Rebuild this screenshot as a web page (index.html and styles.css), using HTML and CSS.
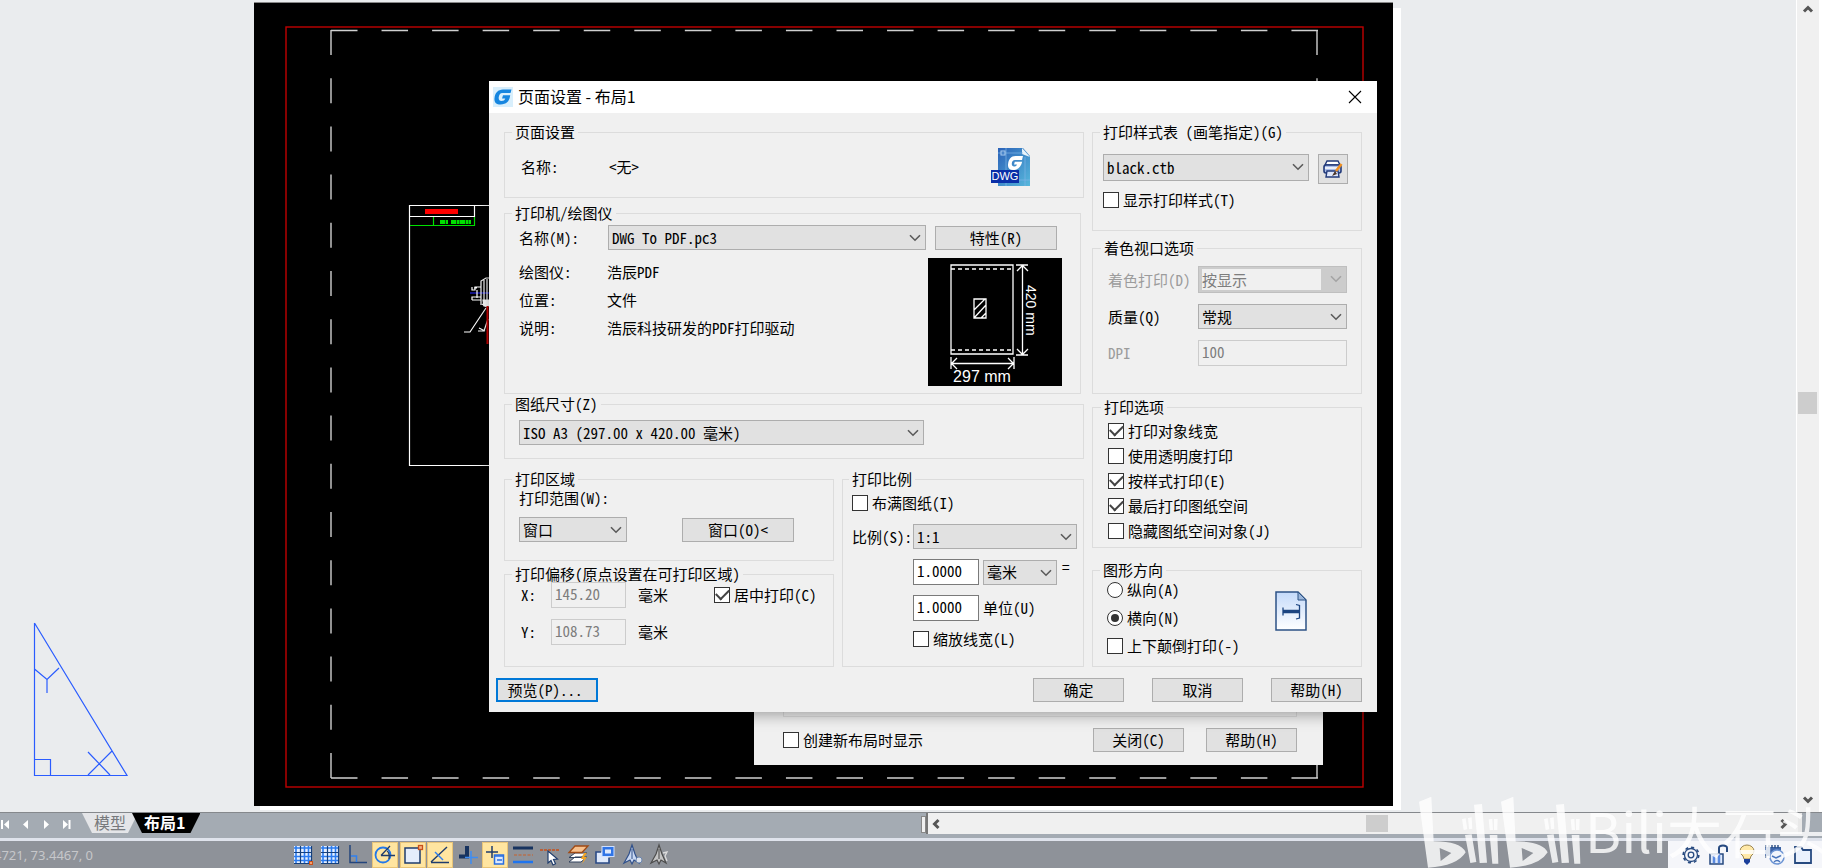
FILE: index.html
```html
<!DOCTYPE html>
<html lang="zh-CN">
<head>
<meta charset="utf-8">
<title>页面设置 - 布局1</title>
<link rel="stylesheet" href="styles.css">
</head>
<body>
<svg class="defs" aria-hidden="true">
  <symbol id="chevron" viewBox="0 0 12 8"><path d="M1 1.2 6 6.2l5-5" fill="none" stroke="#5a5a5a" stroke-width="1.6"/></symbol>
  <symbol id="arrow" viewBox="0 0 12 12"><path d="M2 8.5 6 4.5l4 4" fill="none" stroke="#555" stroke-width="3"/></symbol>
</svg>

<div class="workspace">
  <main class="stage">
    <svg class="drawing" width="1422" height="812" viewBox="0 0 1422 812">
      <rect x="260" y="8" width="1141" height="802" fill="#fff"/>
      <rect x="254" y="2" width="1139" height="804" fill="#000"/>
      <path d="M254 2.5H1393" stroke="#888"/>
      <rect x="286" y="27" width="1077" height="760" fill="none" stroke="#c00000" stroke-width="1.4"/>
      <g fill="none" stroke="#cfcfcf" stroke-width="1.4">
        <path d="M331 30.5H1318" stroke-dasharray="26.500 24.050"/>
        <path d="M331 778H1318" stroke-dasharray="26.500 24.050"/>
        <path d="M331 30V778" stroke-dasharray="25 23.200"/>
        <path d="M1317 30V778" stroke-dasharray="25 23.200"/>
      </g>
      <g fill="none" stroke="#fff" stroke-width="1.200">
        <path d="M492 205.500H409.500V465.500H492M410 216.500H474.500V205.500"/>
        <path d="M410 225.500H474.500V217M433.500 217V225" stroke="#00e000"/>
        <path d="M440 222h8M451 222h20" stroke="#00e000" stroke-width="4" stroke-dasharray="5 .6 3 .4"/>
        <rect x="425" y="209" width="33" height="5" fill="#f00" stroke="none"/>
        <path d="M470 293h22" stroke="#2020e0"/>
        <path d="M481 305V281l5-3h6M484 302V280M487 300V279M481 287h-6v3h-3v-3M477 290v8M472 300v-3h9v3h-9M474 288h3M482 304l5 3M464 332h6l16-24M478 331h6l4-12M479 328l6 3"/>
        <path d="M483 300h6v6h-5z" fill="#fff"/>
        <path d="M487.500 306V344" stroke="#d00000" stroke-width="2"/>
      </g>
    </svg>

    <svg class="ucs" width="100" height="160" viewBox="0 0 100 160">
      <path d="M4.500 2V154.500H97L4.500 2M4.500 138.500H20.500V154.500M4.500 48 17 58.500 29 47M17 58.500V72M58 131 80 154M82 130 58 154" fill="none" stroke="#2a5cff" stroke-width="1.200"/>
    </svg>

    <section class="window creator" aria-label="新布局">
      <div class="creator-edge"></div>
      <div class="creator-row">
        <label class="check"><input type="checkbox">创建新布局时显示</label>
        <div class="creator-buttons">
          <button class="btn action">关闭(C)</button>
          <button class="btn action">帮助(H)</button>
        </div>
      </div>
    </section>

    <section class="window setup" role="dialog" aria-labelledby="setup-title">
      <header class="titlebar">
        <svg class="logo" width="20" height="20" viewBox="0 0 20 20">
          <rect width="20" height="20" fill="#d9effc"/>
          <path d="M18.500 2.500 17.500 6H9.500C7 6 6 8 5.700 10.500 5.500 13 6.500 14 8.500 14c2 0 3.300-.8 3.800-2.500H9l1-3.200h7.200C16.500 14 14 17.500 7.500 17.500 3 17.500 1 15 1.500 11 2 6 5 2.500 10 2.500z" fill="#1686e0"/>
        </svg>
        <h1 id="setup-title">页面设置 - 布局1</h1>
        <button class="close" aria-label="关闭"><svg width="14" height="14" viewBox="0 0 14 14"><path d="M1 1 13 13M13 1 1 13" stroke="#000" stroke-width="1.100"/></svg></button>
      </header>

      <form class="setup-body">
        <div class="columns">
          <div class="col-left">
            <fieldset class="group page">
              <legend>页面设置</legend>
              <div class="page-row">
                <span class="page-label">名称:</span><span class="page-value">&lt;无&gt;</span>
                <svg width="40" height="40" viewBox="0 0 40 40">
                  <defs><linearGradient id="dwg" x1="0" y1="0" x2="1" y2="1"><stop offset="0" stop-color="#2b62b8"/><stop offset="1" stop-color="#57b8dc"/></linearGradient></defs>
                  <path d="M7 1h25l7 8v30H7z" fill="url(#dwg)"/>
                  <path d="M31 1l8 9-8-3z" fill="#e8f3fa"/>
                  <path d="M7 6H32M15 1V39M34 10V39M7 33H39" stroke="#7fb6e6" stroke-width=".7"/>
                  <rect x="10" y="4" width="4" height="4" fill="none" stroke="#a9cdf0"/>
                  <path d="M32 9 31 13H24c-2 0-3 1.500-3.200 3.500-.2 2 .7 3 2.200 3 1.500 0 2.500-.6 3-2h-3l.8-2.800h7.400C30 20 27 23 22 23c-3.500 0-5.300-2-5-5.500C17.500 12 20 9 24.500 9z" fill="#fff"/>
                  <rect y="23" width="28" height="13" fill="#0a2fa8"/>
                  <text x="14" y="33" class="dwg-text">DWG</text>
                </svg>
              </div>
            </fieldset>

            <fieldset class="group printer">
              <legend>打印机/绘图仪</legend>
              <div class="printer-top">
                <label for="printer">名称(M):</label>
                <span class="combo"><select id="printer"><option>DWG To PDF.pc3</option></select><svg><use href="#chevron"/></svg></span>
                <button type="button" class="btn">特性(R)</button>
              </div>
              <div class="printer-info">
                <dl>
                  <dt>绘图仪:</dt><dd>浩辰PDF</dd>
                  <dt>位置:</dt><dd>文件</dd>
                  <dt>说明:</dt><dd>浩辰科技研发的PDF打印驱动</dd>
                </dl>
                <svg width="134" height="128" viewBox="0 0 134 128">
                  <rect width="134" height="128" fill="#000"/>
                  <g fill="none" stroke="#fff" stroke-width="1.300">
                    <path d="M23 7H85V96H23z"/>
                    <path d="M23 11H85M23 92H85" stroke-dasharray="4 3"/>
                    <path d="M46 41H58V60H46zM46 52 57 41M46 60 58 47M53 60 58 55"/>
                    <path d="M88 7H100M88 97H100M94.500 7V97M89 13 94.500 7.500 100 13M89 91 94.500 96.500 100 91"/>
                    <path d="M23 99V111M86 99V111M23 105.500H86M29 100 23.500 105.500 29 111M80 100 85.500 105.500 80 111"/>
                  </g>
                  <text x="54" y="124" class="size-w">297 mm</text>
                  <text class="size-h" transform="translate(98 27) rotate(90)">420 mm</text>
                </svg>
              </div>
            </fieldset>

            <fieldset class="group paper">
              <legend>图纸尺寸(Z)</legend>
              <span class="combo"><select aria-label="图纸尺寸(Z)"><option>ISO A3 (297.00 x 420.00 毫米)</option></select><svg><use href="#chevron"/></svg></span>
            </fieldset>

            <div class="split">
              <div class="split-left">
                <fieldset class="group area">
                  <legend>打印区域</legend>
                  <label for="range">打印范围(W):</label>
                  <div class="area-row">
                    <span class="combo"><select id="range"><option>窗口</option></select><svg><use href="#chevron"/></svg></span>
                    <button type="button" class="btn">窗口(O)&lt;</button>
                  </div>
                </fieldset>
                <fieldset class="group offset">
                  <legend>打印偏移(原点设置在可打印区域)</legend>
                  <div class="offset-grid">
                    <label for="ox">X:</label><input id="ox" type="text" value="145.20" disabled><span>毫米</span>
                    <label class="check"><input type="checkbox" checked>居中打印(C)</label>
                    <label for="oy">Y:</label><input id="oy" type="text" value="108.73" disabled><span>毫米</span>
                  </div>
                </fieldset>
              </div>
              <fieldset class="group scale">
                <legend>打印比例</legend>
                <label class="check"><input type="checkbox">布满图纸(I)</label>
                <div class="scale-grid">
                  <label for="ratio">比例(S):</label>
                  <span class="combo ratio"><select id="ratio"><option>1:1</option></select><svg><use href="#chevron"/></svg></span>
                  <input class="start" type="text" value="1.0000" aria-label="图纸单位数">
                  <span class="unit"><span class="combo"><select aria-label="单位"><option>毫米</option></select><svg><use href="#chevron"/></svg></span><span class="eq">=</span></span>
                  <input class="start" id="units" type="text" value="1.0000">
                  <label for="units">单位(U)</label>
                  <label class="check lineweight"><input type="checkbox">缩放线宽(L)</label>
                </div>
              </fieldset>
            </div>
          </div>

          <div class="col-right">
            <fieldset class="group styles">
              <legend>打印样式表 (画笔指定)(G)</legend>
              <div class="styles-row">
                <span class="combo tall"><select aria-label="打印样式表"><option>black.ctb</option></select><svg><use href="#chevron"/></svg></span>
                <button type="button" class="btn icon-btn" aria-label="编辑打印样式">
                  <svg width="20" height="18" viewBox="0 0 20 18">
                    <path d="M4 1h11l2 4H2z" fill="#fff" stroke="#223a7a" stroke-width="1.400"/>
                    <rect x="1" y="5" width="17" height="8" rx="2" fill="#a9bce8" stroke="#223a7a" stroke-width="1.600"/>
                    <path d="M4 11h11l1 6H3z" fill="#dfe7fb" stroke="#223a7a" stroke-width="1.400"/>
                    <path d="M2 8h12" stroke="#fff" stroke-width="1.500"/>
                    <path d="M18.500 4 13 11" stroke="#f09020" stroke-width="2.600"/>
                    <path d="M12 11 9 16l5-2z" fill="#4a3428"/>
                  </svg>
                </button>
              </div>
              <label class="check"><input type="checkbox">显示打印样式(T)</label>
            </fieldset>

            <fieldset class="group shade">
              <legend>着色视口选项</legend>
              <div class="shade-grid">
                <label for="shade" class="dim">着色打印(D)</label>
                <span class="combo tall"><select id="shade" disabled><option>按显示</option></select><svg class="faded"><use href="#chevron"/></svg></span>
                <label for="quality">质量(Q)</label>
                <span class="combo"><select id="quality"><option>常规</option></select><svg><use href="#chevron"/></svg></span>
                <label for="dpi" class="dim">DPI</label>
                <input id="dpi" type="text" value="100" disabled>
              </div>
            </fieldset>

            <fieldset class="group options">
              <legend>打印选项</legend>
              <label class="check"><input type="checkbox" checked>打印对象线宽</label>
              <label class="check"><input type="checkbox">使用透明度打印</label>
              <label class="check"><input type="checkbox" checked>按样式打印(E)</label>
              <label class="check"><input type="checkbox" checked>最后打印图纸空间</label>
              <label class="check"><input type="checkbox">隐藏图纸空间对象(J)</label>
            </fieldset>

            <fieldset class="group orient">
              <legend>图形方向</legend>
              <div class="orient-row">
                <div class="orient-list">
                  <label class="check"><input type="radio" name="orient">纵向(A)</label>
                  <label class="check"><input type="radio" name="orient" checked>横向(N)</label>
                  <label class="check"><input type="checkbox">上下颠倒打印(-)</label>
                </div>
                <svg width="32" height="40" viewBox="0 0 32 40">
                  <defs><linearGradient id="sheet" x1="0" y1="0" x2="0" y2="1"><stop offset="0" stop-color="#c4dafa"/><stop offset="1" stop-color="#fff"/></linearGradient></defs>
                  <path d="M1 1H23l8 8V39H1z" fill="url(#sheet)" stroke="#2c5285" stroke-width="1.500"/>
                  <path d="M23 1v8h8z" fill="#9db8dc" stroke="#2c5285"/>
                  <path d="M8 20.500H24" stroke="#1c4480" stroke-width="3.500"/>
                  <path d="M8 16.500v8" stroke="#1c4480" stroke-width="1.300"/>
                  <path d="M21 13.500l3.500 1v12.500l-3.500 1" fill="none" stroke="#1c4480" stroke-width="1.300"/>
                </svg>
              </div>
            </fieldset>
          </div>
        </div>

        <footer class="actions">
          <button type="button" class="btn preview">预览(P)...</button>
          <button type="button" class="btn action">确定</button>
          <button type="button" class="btn action">取消</button>
          <button type="button" class="btn action">帮助(H)</button>
        </footer>
      </form>
    </section>
  </main>

  <div class="vscroll">
    <svg width="12" height="12"><use href="#arrow"/></svg>
    <div class="vtrack"><div class="thumb"></div></div>
    <svg class="down" width="12" height="12"><use href="#arrow"/></svg>
  </div>
</div>

<div class="tabbar">
  <nav class="tabs" aria-label="布局">
    <svg width="82" height="24" viewBox="0 0 82 24" fill="#fff">
      <path d="M1 7h2v9H1zM9 7v9L4 11.500zM28 7v9l-5-4.500zM44 7v9l5-4.500zM63 7v9l5-4.500zM68.500 7h2v9h-2z"/>
    </svg>
    <button class="tab">模型</button>
    <button class="tab active">布局1</button>
  </nav>
  <div class="splitter"></div>
  <div class="hscroll">
    <svg class="left" width="12" height="12"><use href="#arrow"/></svg>
    <div class="htrack"><div class="thumb"></div></div>
    <svg class="right" width="12" height="12"><use href="#arrow"/></svg>
  </div>
</div>

<div class="statusbar">
  <output class="coords">4721, 73.4467, 0</output>
  <div class="tools">
    <button aria-label="捕捉"><svg viewBox="0 0 24 24"><rect x="3" y="3" width="18" height="18" fill="#e6f0ff"/><path d="M5 3V21M13.500 3V21M17.500 3V21M3 5H21M3 13.500H21M3 17.500H21" stroke="#2a7bf0" stroke-width="1.600"/><path d="M9.500 3V21M3 9.500H21M3 20.500H18M20.500 3V18" stroke="#16407c" stroke-width="1.200"/><rect x="18.500" y="18.500" width="3" height="3" fill="#f5a070" stroke="#c8501a"/></svg></button>
    <button aria-label="栅格"><svg viewBox="0 0 24 24"><rect x="3" y="3" width="18" height="18" fill="#e6f0ff"/><path d="M5 3V21M13.500 3V21M17.500 3V21M3 5H21M3 13.500H21M3 17.500H21" stroke="#2a7bf0" stroke-width="1.600"/><path d="M9.500 3V21M3 9.500H21M3 20.500H21M20.500 3V21" stroke="#16407c" stroke-width="1.200"/></svg></button>
    <button aria-label="正交"><svg viewBox="0 0 24 24" fill="none"><path d="M4 2V19.500H21" stroke="#24457c" stroke-width="1.500"/><path d="M5 13H10.500V19" stroke="#2f80f0" stroke-width="1.500"/></svg></button>
    <button aria-label="极轴" class="on"><svg viewBox="0 0 24 24" fill="none"><circle cx="10" cy="12" r="7.500" stroke="#2478e8" stroke-width="1.800"/><path d="M8 12.500H22M8 12.500 17 3M14 8q3 2 2 8" stroke="#1f3c6c" stroke-width="1.300"/></svg></button>
    <button aria-label="对象捕捉" class="on"><svg viewBox="0 0 24 24"><rect x="4" y="5" width="15" height="15" fill="#e4edfc" stroke="#1f3c6c" stroke-width="1.500"/><rect x="17.500" y="2.500" width="4" height="4" fill="#f5b080" stroke="#c8501a" stroke-width="1.300"/></svg></button>
    <button aria-label="对象追踪" class="on"><svg viewBox="0 0 24 24" fill="none"><path d="M3 19.500H21M3 19 19 4" stroke="#1f3c6c" stroke-width="1.400"/><path d="M7 9l8 8" stroke="#2f80f0" stroke-width="1.400"/></svg></button>
    <button aria-label="动态UCS"><svg viewBox="0 0 24 24" fill="none"><path d="M11 3V13.500H3" stroke="#17335f" stroke-width="4"/><path d="M15 8V21M9 14.500H22" stroke="#3c8df5" stroke-width="1.500"/></svg></button>
    <button aria-label="动态输入" class="on"><svg viewBox="0 0 24 24" fill="none"><path d="M9 3V15M3 9H15" stroke="#1f3c6c" stroke-width="1.500"/><rect x="11.500" y="12" width="9" height="9" fill="#dce8fc" stroke="#2a6fe0" stroke-width="1.500"/><path d="M11 13H21M14 17h5" stroke="#2a6fe0" stroke-width="1.500"/></svg></button>
    <button aria-label="线宽"><svg viewBox="0 0 24 24"><path d="M2 5H22" stroke="#17335f" stroke-width="3"/><path d="M3 12H22" stroke="#c8602a" stroke-width="1.200" stroke-dasharray="3 1.500"/><path d="M2 19H22" stroke="#1f74ee" stroke-width="2.500"/></svg></button>
    <button aria-label="选择循环"><svg viewBox="0 0 24 24"><path d="M2 7H21" stroke="#c8501a" stroke-width="1.300" stroke-dasharray="3 1"/><path d="M10 8V20l3-2.500 2 4.500 2.500-1.200-2-4.300 4-.5z" fill="#fff" stroke="#1f3c6c" stroke-width="1.200"/></svg></button>
    <button aria-label="图层"><svg viewBox="0 0 24 24"><path d="M3 19 9 14H21l-6 5zM3 14.500 9 10H21l-6 4.500z" fill="#fff" stroke="#33435e"/><path d="M3 9.500 9 3H22l-6 6.500z" fill="#f7c08c" stroke="#a04a14" stroke-width="1.300"/><path d="M18 10l-3 6h3l-2 5 5-7h-3l3-4z" fill="#f5a623"/></svg></button>
    <button aria-label="快捷特性"><svg viewBox="0 0 24 24"><path d="M8 9H3V20H16V15" fill="#dfe9fb" stroke="#2a4a86" stroke-width="1.600"/><rect x="9" y="3.500" width="12" height="10" fill="#2f74e6" stroke="#cfe0ff"/><rect x="12" y="6.500" width="6" height="4" fill="#dfe9fb"/></svg></button>
    <button aria-label="注释可见性"><svg viewBox="0 0 24 24"><path d="M11 2 8 11l-5 9 6-3 2 4 2-4 5 3-4-9z" fill="#c9d8f2" stroke="#30508a" stroke-width="1.200"/><path d="M11 6v10" stroke="#30508a"/><circle cx="18" cy="17" r="3" fill="#dde3ec" stroke="#6c86b0"/></svg></button>
    <button aria-label="注释比例"><svg viewBox="0 0 24 24"><path d="M11 2 8 11l-5 9 6-3 2 4 2-4 5 3-4-9z" fill="#c4c4c4" stroke="#4c4c4c" stroke-width="1.200"/><path d="M11 6v10" stroke="#444"/><path d="M15 10l4-1-2 4 2 5" fill="none" stroke="#ddd" stroke-width="1.300"/></svg></button>
  </div>
  <div class="tray">
    <button aria-label="设置"><svg viewBox="0 0 24 24" fill="none" stroke="#274a80"><circle cx="12" cy="12" r="6.500" stroke-width="1.300"/><circle cx="12" cy="12" r="7.800" stroke-width="1.600" stroke-dasharray="3.100 3"/><circle cx="12" cy="12" r="2.800" stroke-width="1.300"/></svg></button>
    <button aria-label="锁定"><svg viewBox="0 0 24 24"><path d="M12 10V5q0-2.500 4-2.500T20 5v4" fill="none" stroke="#274a80" stroke-width="2"/><path d="M3 11H16V21H3z" fill="#dfe9fb" stroke="#274a80" stroke-width="1.500"/><path d="M7 11v9M12 11v9" stroke="#5a8ae0" stroke-width="2.500"/></svg></button>
    <button aria-label="隔离对象"><svg viewBox="0 0 24 24"><path d="M5 8a7 6 0 0 1 14 0q0 3-3 5l-1 3H9l-1-3Q5 11 5 8z" fill="#ffe9a8" stroke="#9a8450"/><path d="M9 16h6v3l-3 3-3-3z" fill="#1b3f9a"/></svg></button>
    <button aria-label="硬件加速"><svg viewBox="0 0 24 24"><path d="M2 4H18V13H2z" fill="#3c64a8"/><path d="M3 2V5M6 2V5M9 2V5M12 2V5M15 2V5M3 12v3" stroke="#274a80" stroke-width="1.400"/><circle cx="14" cy="14" r="7" fill="#f2f6fd" stroke="#6d95d4" stroke-width="1.500"/><path d="M9 13l4 2 2-1 4-2M11 19q3-3 6 0" fill="none" stroke="#4a76bc" stroke-width="1.400"/></svg></button>
    <button aria-label="全屏"><svg viewBox="0 0 24 24"><path d="M4 20V4H10l2 3H20V20z" fill="#eaf1fd" stroke="#274a80" stroke-width="1.800"/></svg></button>
    <button aria-label="更多"><svg viewBox="0 0 24 24"><circle cx="12" cy="12" r="8" fill="#f0b080" stroke="#a0644a" stroke-width="1.500"/></svg></button>
  </div>
</div>

<div class="watermark">
  <svg width="164" height="72" viewBox="172 48 492 216">
    <defs>
      <g id="bili">
        <path fill-rule="evenodd" d="M175 65 212 50 219 184Q300 184 315 217 290 258 202 263zM237 204 240 243 272 219z"/>
        <path d="M304 117 315 115 320 148 309 150zM322 114 333 112 335 146 325 148zM313 165 333 163 347 246 329 249zM340 74 364 72 379 248 357 249zM384 118 395 117 397 150 387 151zM400 117 411 117 410 150 400 150zM387 165 410 165 413 251 395 251z"/>
      </g>
    </defs>
    <use href="#bili"/><use href="#bili" x="246"/>
  </svg>
  <span>Bili大石头</span>
</div>
</body>
</html>
```
FILE: styles.css
```css
* { box-sizing: border-box; }

body {
  margin: 0;
  height: 100vh;
  display: flex;
  flex-direction: column;
  overflow: hidden;
  position: relative;
  background: #fff;
  color: #000;
  font: 15px/20px "Noto Sans CJK SC", sans-serif;
}

button, input, select { font: inherit; color: inherit; }
button { padding: 0; border: 0; background: none; }
svg { display: block; flex: none; }
.defs { position: absolute; width: 0; height: 0; }

/* Drawing area */
.workspace { flex: 1; min-height: 0; display: flex; padding-right: 3px; }
.stage { flex: 1; min-width: 0; position: relative; overflow: hidden; background: #eaecee; }
.drawing { position: absolute; left: 0; top: 0; }
.ucs { position: absolute; left: 30px; top: 621px; }

.vscroll {
  width: 23px;
  display: flex;
  flex-direction: column;
  align-items: center;
  padding: 3px 2px 6px 1px;
  border-left: 1px solid #fff;
  background: #f0f0f0;
}
.vtrack { flex: 1; width: 100%; display: flex; flex-direction: column; }
.vtrack::before { content: ""; flex: 377; }
.vtrack::after { content: ""; flex: 380; }
.thumb { background: #cdcdcd; }
.vtrack .thumb { height: 22px; }
.down { transform: rotate(180deg); }
.left { transform: rotate(-90deg); }
.right { transform: rotate(90deg); }

/* Windows */
.window {
  position: absolute;
  background: #f0f0f0;
  font-feature-settings: "hwid";
}
.setup { left: 489px; top: 81px; width: 888px; box-shadow: 0 3px 14px rgba(0, 0, 0, .35); }
.creator { left: 754px; top: 690px; width: 569px; padding: 0 26px 13px 29px; }
.creator-edge { height: 27px; border: 1px solid #dcdcdc; border-top: 0; margin-bottom: 11px; }
.creator-row, .creator-buttons { display: flex; justify-content: space-between; align-items: center; }
.creator-buttons { gap: 22px; }

.titlebar { display: flex; align-items: center; height: 32px; padding: 0 15px 0 4px; background: #fff; }
.titlebar h1 { flex: 1; margin: 0 0 2px 5px; font-size: 16px; font-weight: 400; font-feature-settings: normal; }
.setup-body { padding: 11px 15px 10px; }
.columns { display: flex; gap: 8px; }
.col-left { flex: 580; display: flex; flex-direction: column; }
.col-right { flex: 270; display: flex; flex-direction: column; }

/* Group boxes */
.group { margin: 0; min-width: 0; padding: 0 14px; border: 1px solid #dcdcdc; }
.group legend { margin-left: -7px; padding: 0 3px; line-height: 16px; }

/* Controls */
.btn {
  height: 24px;
  border: 1px solid #adadad;
  background: #e1e1e1;
  line-height: 20px;
  text-align: center;
}
.action { width: 91px; }

.combo { position: relative; display: flex; height: 25px; }
.combo.tall { height: 27px; }
.combo select {
  width: 100%;
  appearance: none;
  padding: 0 24px 0 3px;
  border: 1px solid #adadad;
  border-radius: 0;
  background: #e1e1e1;
  opacity: 1;
}
.combo select:disabled {
  color: #7d7d7d;
  border-color: #bfbfbf;
  background: linear-gradient(#f0f0f0, #f0f0f0) 3px 2px / calc(100% - 28px) calc(100% - 4px) no-repeat #ccc;
}
.combo svg { position: absolute; right: 5px; top: 9px; width: 12px; height: 8px; pointer-events: none; }
.combo .faded { opacity: .35; }

input[type="text"] {
  width: 100%;
  min-width: 0;
  height: 26px;
  padding: 0 3px 3px;
  border: 1px solid #7a7a7a;
  border-radius: 0;
  background: #fff;
}
input[type="text"]:disabled { color: #7d7d7d; border-color: #ccc; background: #f0f0f0; }

.check { display: flex; align-items: center; gap: 4px; white-space: nowrap; }
.check input {
  appearance: none;
  display: grid;
  place-items: center;
  width: 16px;
  height: 16px;
  margin: 0;
  border: 1px solid #333;
  background: #fff;
}
.check input[type="radio"] { border-radius: 50%; }
.check input[type="checkbox"]:checked::after {
  content: "";
  width: 11px;
  height: 6px;
  margin-bottom: 4px;
  border: solid #444;
  border-width: 0 0 2px 2px;
  transform: rotate(-45deg);
}
.check input[type="radio"]:checked::after {
  content: "";
  width: 8px;
  height: 8px;
  border-radius: 50%;
  background: #333;
}
.dim { color: #9c9c9c; }

/* Left column */
.page { padding: 7px 52px 10px 16px; margin-bottom: 7px; }
.page legend { margin-left: -9px; }
.page-row { display: flex; align-items: center; }
.page-label { width: 88px; }
.page-value { flex: 1; }
.dwg-text { font: 11px "Liberation Sans", sans-serif; fill: #fff; text-anchor: middle; }

.printer { padding: 4px 18px 7px 14px; margin: 0 3px 2px 0; }
.printer-top { display: flex; align-items: center; padding-right: 5px; margin-bottom: 8px; }
.printer-top label { width: 89px; }
.printer-top .combo { flex: 1; margin-right: 9px; }
.printer-top .btn { width: 122px; }
.printer-info { display: flex; justify-content: space-between; }
.printer-info dl { margin: 0; display: grid; grid-template-columns: 88px auto; grid-auto-rows: 28px; align-items: center; align-content: start; }
.printer-info dd { margin: 0; }
.size-w { font: 16px "Liberation Sans", sans-serif; fill: #fff; text-anchor: middle; }
.size-h { font: 14px "Liberation Sans", sans-serif; fill: #fff; }
.size-w, .size-h { font-feature-settings: normal; }

.paper { padding: 8px 159px 13px 14px; margin-bottom: 12px; }

.split { display: grid; grid-template-columns: 330fr 242fr; gap: 8px; }
.split-left { min-width: 0; display: flex; flex-direction: column; gap: 5px; }

.area { padding: 1px 39px 18px 14px; }
.area label { display: block; margin-bottom: 9px; }
.area-row { display: flex; align-items: center; justify-content: space-between; }
.area .combo { width: 108px; }
.area .btn { width: 112px; }

.offset { flex: 1; padding-bottom: 20px; }
.offset-grid {
  display: grid;
  grid-template-columns: 32px 75px 88px 1fr;
  row-gap: 11px;
  align-items: center;
}
.offset-grid > span { padding-left: 12px; }
.offset-grid > label:not(.check) { padding-left: 2px; }

.scale { padding: 6px 6px 19px 9px; }
.scale legend { margin-left: -3px; }
.scale-grid { display: grid; grid-template-columns: 61px 66px 1fr; gap: 10px 0; margin-top: 11px; align-items: center; }
.ratio { grid-column: 2 / 4; }
.start { grid-column: 2; }
.scale-grid > .start + * { margin-left: 4px; }
.unit { display: flex; gap: 5px; }
.unit .combo { width: 74px; }
.eq { line-height: 14px; }
.lineweight { grid-column: 2 / 4; line-height: 16px; }

/* Right column */
.styles { padding: 14px 13px 20px 10px; margin-bottom: 9px; }
.styles legend { margin-left: -3px; }
.styles-row { display: flex; gap: 9px; margin-bottom: 6px; }
.styles-row .combo { flex: 1; }
.icon-btn { width: 30px; height: 30px; display: grid; place-items: center; }

.shade { padding: 10px 14px 27px 15px; margin-bottom: 5px; }
.shade-grid { display: grid; grid-template-columns: 90px 1fr; row-gap: 11px; align-items: center; }

.options { display: flex; flex-direction: column; gap: 5px; padding: 6px 14px 6px 15px; margin-bottom: 14px; }

.orient { padding: 2px 54px 10px 14px; }
.orient-row { display: flex; justify-content: space-between; align-items: flex-start; }
.orient-row > svg { margin-top: 11px; }
.orient-list { display: flex; flex-direction: column; gap: 8px; }

.actions { display: flex; gap: 28px; margin: 11px 0 0 -8px; }
.preview { width: 102px; margin-right: auto; border: 2px solid #0078d7; padding-right: 4px; }

/* Layout tabs */
.tabbar {
  display: grid;
  grid-template-columns: 921fr 5px 876fr;
  align-items: start;
  height: 26px;
  padding-right: 20px;
  border-top: 1px solid #85888c;
  background: #a4abb3;
}
.tabs { display: flex; align-items: flex-start; }
.tab {
  height: 20px;
  padding: 0 12px 2px;
  margin-right: -6px;
  font-size: 16px;
  line-height: 16px;
  color: #77797c;
  background: #e4e5e8;
  clip-path: polygon(0 0, 100% 0, calc(100% - 10px) 100%, 10px 100%);
}
.tab.active { color: #fff; background: #000; font-weight: 700; padding: 0 15px 2px 12px; }
.splitter { height: 17px; margin-top: 3px; border: 1px solid #888; background: #f0f0f0; }
.hscroll {
  display: flex;
  align-items: center;
  height: 21px;
  padding: 0 8px 0 2px;
  border-left: 2px solid #777;
  border-right: 4px solid #e8e8e8;
  background: #f0f0f0;
}
.htrack { flex: 1; height: 17px; display: flex; }
.htrack::before { content: ""; flex: 425; }
.htrack::after { content: ""; flex: 391; }
.htrack .thumb { width: 22px; }

/* Status bar */
.statusbar {
  display: flex;
  align-items: stretch;
  height: 30px;
  overflow: hidden;
  border-top: 3px solid #dfe3ec;
  background: #8e9299;
}
.coords {
  width: 289px;
  margin-left: -6px;
  margin-right: 6px;
  font: 13px/28px "Noto Sans", sans-serif;
  color: #c6c7ca;
}
.tools { width: 385px; display: grid; grid-template-columns: repeat(14, 1fr); justify-items: center; }
.tools button, .tray button { width: 24px; height: 24px; margin-top: 2px; }
.statusbar .on { background: #ffe5a0; outline: 1px solid #e8c478; }
.tray { display: flex; gap: 4px; margin-left: auto; width: 154px; padding-left: 11px; background: #f5f6fa; }
.tray button { flex: none; }

/* Watermark over the lower right corner */
.watermark {
  position: absolute;
  right: 0;
  bottom: 0;
  width: 404px;
  height: 72px;
  display: flex;
  gap: 3px;
  overflow: hidden;
  opacity: .82;
  color: #fff;
  fill: #fff;
  font-size: 55px;
  line-height: 66px;
  white-space: nowrap;
  pointer-events: none;
}
```
